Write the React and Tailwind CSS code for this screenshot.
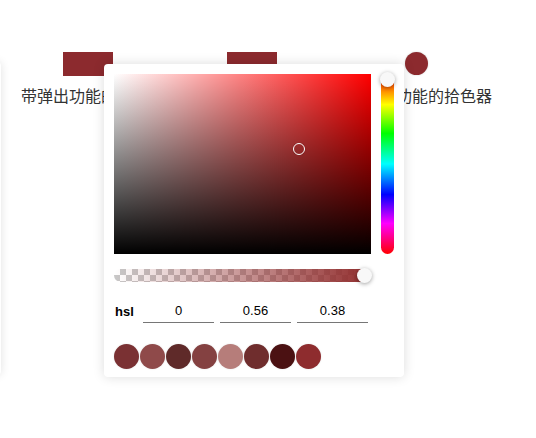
import React from "react";

const swatches = [
  "#7a3133",
  "#8f4a4a",
  "#5f2a29",
  "#844141",
  "#b67d7a",
  "#6f2d2d",
  "#4b1112",
  "#8e2c2e",
];

const hsl = ["0", "0.56", "0.38"];

// popover picker that sits over the demo row
function ColorPopover() {
  return (
    <div className="absolute left-[104px] top-[64px] w-[300px] rounded-[4px] bg-white px-[10px] pt-[10px] pb-[8px] shadow-[0_0_12px_rgba(0,0,0,0.14)]">
      <div className="flex gap-[10px]">
        <div className="relative h-[180px] w-[257px] bg-[#f00]">
          <div className="absolute inset-0 bg-[linear-gradient(to_right,#fff,rgba(255,255,255,0))]" />
          <div className="absolute inset-0 bg-[linear-gradient(to_bottom,rgba(0,0,0,0),#000)]" />
          <div className="absolute left-[185px] top-[75px] h-[12px] w-[12px] -translate-x-1/2 -translate-y-1/2 rounded-full border-[1.5px] border-white shadow-[0_0_1px_rgba(0,0,0,0.4)]" />
        </div>
        <div className="relative h-[180px] w-[13px] rounded-full bg-[linear-gradient(to_bottom,#f00_0%,#ff0_17%,#0f0_33%,#0ff_50%,#00f_67%,#f0f_83%,#f00_100%)]">
          <div className="absolute -left-[1px] -top-[2px] h-[15px] w-[15px] rounded-full bg-[#f8f8f8] shadow-[0_1px_4px_rgba(0,0,0,0.37)]" />
        </div>
      </div>

      <div className="relative mt-[15px] h-[13px] w-[257px]">
        <div className="absolute inset-0 overflow-hidden rounded-full bg-[conic-gradient(#c8c8c8_25%,#fff_0_50%,#c8c8c8_0_75%,#fff_0)] bg-[length:12px_12px]">
          <div className="absolute inset-0 bg-[linear-gradient(to_right,rgba(151,43,43,0),rgb(145,45,45))]" />
        </div>
        <div className="absolute -top-[1px] left-[243px] h-[15px] w-[15px] rounded-full bg-[#f8f8f8] shadow-[0_1px_4px_rgba(0,0,0,0.37)]" />
      </div>

      <div className="mt-[19px] flex items-center font-['Liberation_Sans',Arial,sans-serif] text-[13px]">
        <span className="ml-[1px] w-[28px] font-bold text-black">hsl</span>
        <div className="flex gap-[6px]">
          {hsl.map((v) => (
            <div
              key={v}
              className="flex h-[22px] w-[71px] items-center justify-center border-b border-[#767676] pb-[2px] text-black"
            >
              {v}
            </div>
          ))}
        </div>
      </div>

      <div className="mt-[21px] flex gap-[1px]">
        {swatches.map((c) => (
          <div
            key={c}
            className="h-[25px] w-[25px] rounded-full shadow-[0_0_2px_rgba(0,0,0,0.12)]"
            style={{ backgroundColor: c }}
          />
        ))}
      </div>
    </div>
  );
}

export default function App() {
  return (
    <div className="relative h-[438px] w-[536px] overflow-hidden bg-white font-['Noto_Sans_CJK_SC',sans-serif] text-[16px] text-[#333]">
      <div className="flex items-start pt-[52px]">
        <div className="-ml-[11px] mt-[10px] h-[313px] w-[12px] rounded-[4px] bg-white shadow-[0_0_10px_rgba(0,0,0,0.12)]" />

        <div className="ml-[20px] w-[144px]">
          <div className="ml-[42px] h-[24px] w-[50px] bg-[#8c2a2e]" />
          <div className="mt-[7px] whitespace-nowrap leading-[24px]">带弹出功能的拾色器</div>
        </div>

        <div className="ml-[62px] w-[50px]">
          <div className="h-[24px] w-[50px] bg-[#8c2a2e]" />
        </div>

        <div className="ml-[71px] w-[144px]">
          <div className="ml-[57px] h-[23px] w-[23px] rounded-full bg-[#8c2a2e] shadow-[0_0_2px_rgba(0,0,0,0.2)]" />
          <div className="mt-[8px] whitespace-nowrap leading-[24px]">带弹出功能的拾色器</div>
        </div>
      </div>

      <ColorPopover />
    </div>
  );
}
